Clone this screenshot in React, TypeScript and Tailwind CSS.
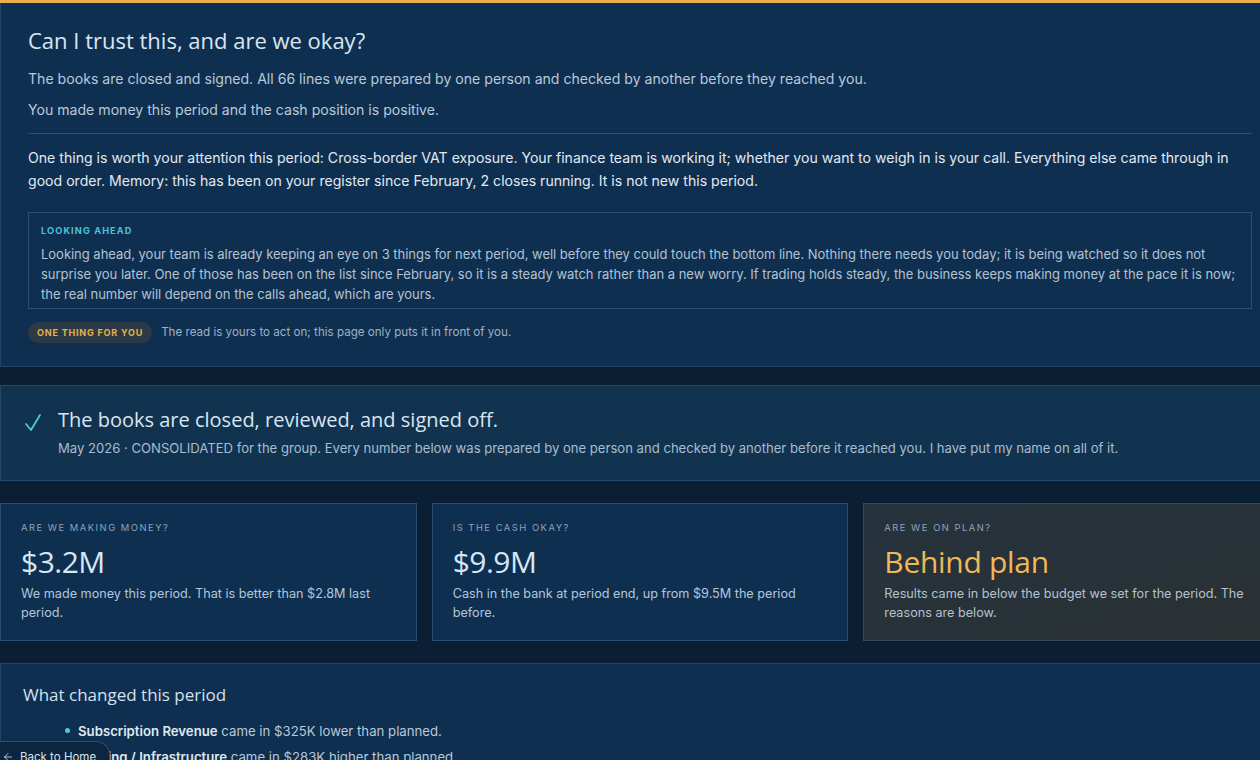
import React from 'react';
import { ArrowLeft } from 'lucide-react';

const HEAD = { fontFamily: '"Open Sans", Inter, sans-serif' };
const BODY = { fontFamily: 'Inter, "Noto Sans", sans-serif' };

const cards = [
    {
        label: 'ARE WE MAKING MONEY?',
        value: '$3.2M',
        text: 'We made money this period. That is better than $2.8M last period.',
        tone: 'plain',
    },
    {
        label: 'IS THE CASH OKAY?',
        value: '$9.9M',
        text: 'Cash in the bank at period end, up from $9.5M the period before.',
        tone: 'plain',
    },
    {
        label: 'ARE WE ON PLAN?',
        value: 'Behind plan',
        text: 'Results came in below the budget we set for the period. The reasons are below.',
        tone: 'warn',
    },
];

const App: React.FC = () => {
    return (
        <div className="w-full h-[760px] overflow-hidden bg-[#0a1e34] relative" style={BODY}>
            <div className="h-[3px] w-full bg-[#e9b04b]" />
            <div className="w-[1280px] flex flex-col">
                {/* Trust summary */}
                <section className="bg-[#0f2f50] border border-t-0 border-[#23446a] px-[27px] pt-[22px] pb-[23px]">
                    <h1 className="text-[22px] leading-[30px] text-[#d9e6f2]" style={HEAD}>
                        Can I trust this, and are we okay?
                    </h1>
                    <p className="mt-[13px] text-[14.1px] leading-[22px] text-[#b9c9d9]">
                        The books are closed and signed. All 66 lines were prepared by one person and checked by another before they reached you.
                    </p>
                    <p className="mt-[9px] text-[14.1px] leading-[22px] text-[#b9c9d9]">
                        You made money this period and the cash position is positive.
                    </p>
                    <div className="mt-[12px] h-px bg-[#2f5075]" />
                    <p className="mt-[12px] text-[14.1px] leading-[23px] text-[#e1e9f2]">
                        One thing is worth your attention this period: Cross-border VAT exposure. Your finance team is working it; whether you want to weigh in is your call. Everything else came through in good order. Memory: this has been on your register since February, 2 closes running. It is not new this period.
                    </p>
                    <div className="mt-[20px] border border-[#2c4e74] pl-[12px] pr-0 pt-[11px] pb-[4px]">
                        <div className="text-[9.2px] font-bold tracking-[0.12em] text-[#4cc0d8]">LOOKING AHEAD</div>
                        <p className="mt-[6px] text-[13px] tracking-[-0.02px] leading-[20px] text-[#b3c3d3]">
                            Looking ahead, your team is already keeping an eye on 3 things for next period, well before they could touch the bottom line. Nothing there needs you today; it is being watched so it does not surprise you later. One of those has been on the list since February, so it is a steady watch rather than a new worry. If trading holds steady, the business keeps making money at the pace it is now; the real number will depend on the calls ahead, which are yours.
                        </p>
                    </div>
                    <div className="mt-[13px] flex items-center gap-[9px]">
                        <span className="rounded-full bg-[#2c3a45] px-[9px] py-[4px] text-[9px] leading-[13px] font-bold tracking-[0.09em] text-[#e6b04c]">
                            ONE THING FOR YOU
                        </span>
                        <span className="text-[11.6px] text-[#9fb1c3]">The read is yours to act on; this page only puts it in front of you.</span>
                    </div>
                </section>

                {/* Sign-off banner */}
                <section className="mt-[18px] bg-[#12334f] border border-[#24496a] px-[23px] pt-[20px] pb-[22px] flex gap-[16px]">
                    <svg width="18" height="20" viewBox="0 0 18 20" className="mt-[7px] shrink-0">
                        <path d="M2 11 L7 17 L16 2" fill="none" stroke="#4fc8d8" strokeWidth="1.8" strokeLinecap="round" strokeLinejoin="round" />
                    </svg>
                    <div>
                        <h2 className="text-[20px] leading-[28px] text-[#d9e6f2]" style={HEAD}>
                            The books are closed, reviewed, and signed off.
                        </h2>
                        <p className="mt-[4px] text-[13.1px] leading-[20px] text-[#a9bccf]">
                            May 2026 · CONSOLIDATED for the group. Every number below was prepared by one person and checked by another before it reached you. I have put my name on all of it.
                        </p>
                    </div>
                </section>

                {/* Headline cards */}
                <div className="mt-[22px] grid grid-cols-3 gap-[15px]">
                    {cards.map((c) => (
                        <div
                            key={c.label}
                            className={
                                c.tone === 'warn'
                                    ? 'border border-[#36485a] bg-gradient-to-br from-[#26323d] to-[#2a3133] px-[20px] pt-[17px] pb-[18px]'
                                    : 'border border-[#2a4d74] bg-[#0f2f51] px-[20px] pt-[17px] pb-[18px]'
                            }
                        >
                            <div className="text-[9.4px] tracking-[0.16em] text-[#8ea3b8]">{c.label}</div>
                            <div
                                className={
                                    c.tone === 'warn'
                                        ? 'mt-[9px] text-[30px] leading-[36px] font-medium tracking-[-0.3px] text-[#f0b858]'
                                        : 'mt-[9px] text-[30px] leading-[36px] font-medium tracking-[-0.5px] text-[#d6e6f7]'
                                }
                                style={HEAD}
                            >
                                {c.value}
                            </div>
                            <p className={c.tone === 'warn' ? 'mt-[4px] text-[12.65px] leading-[19px] text-[#b5c1cc]' : 'mt-[4px] text-[12.65px] leading-[19px] text-[#b3c6da]'}>
                                {c.text}
                            </p>
                        </div>
                    ))}
                </div>

                {/* What changed */}
                <section className="mt-[22px] bg-[#0f2f50] border border-[#23446a] px-[22px] pt-[19px] pb-[20px]">
                    <h3 className="text-[17px] leading-[24px] text-[#d3e1ee]" style={HEAD}>What changed this period</h3>
                    <ul className="mt-[14px] pl-[42px] flex flex-col gap-[6px] text-[13.2px] leading-[20px] text-[#b9c9d9]">
                        <li className="flex items-center gap-[8px]">
                            <span className="w-[5px] h-[5px] rounded-full bg-[#4fc8d8]" />
                            <span>
                                <b className="font-semibold text-[#dfe8f1]">Subscription Revenue</b> came in $325K lower than planned.
                            </span>
                        </li>
                        <li className="flex items-center gap-[8px]">
                            <span className="w-[5px] h-[5px] rounded-full bg-[#4fc8d8]" />
                            <span>
                                <b className="font-semibold text-[#dfe8f1]">Hosting / Infrastructure</b> came in $283K higher than planned.
                            </span>
                        </li>
                    </ul>
                </section>
            </div>

            {/* Floating back link */}
            <div className="absolute left-0 top-[741px] flex items-center gap-[6px] rounded-tr-[14px] border border-l-0 border-[#2c4e74] bg-[#0c2540] pl-[2px] pr-[13px] pt-[8px] pb-[6px] text-[11.5px] leading-[14px] text-[#d7e3ee]">
                <ArrowLeft size={12} strokeWidth={1.6} />
                Back to Home
            </div>
        </div>
    );
};

export default App;
